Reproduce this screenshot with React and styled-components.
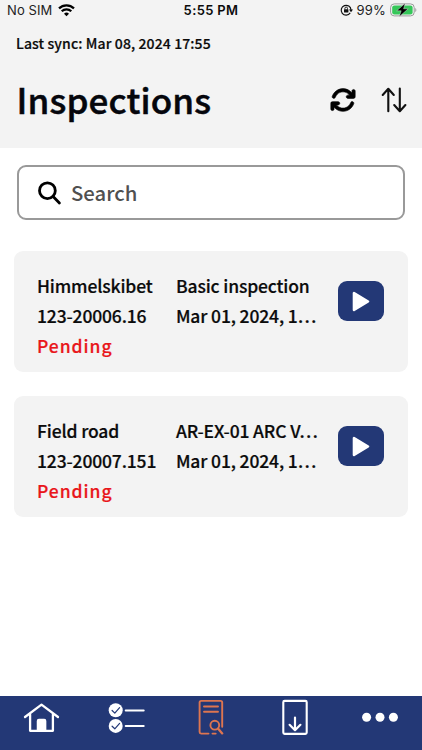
import styled, { createGlobalStyle } from "styled-components"
import { FaArrowsRotate } from "react-icons/fa6"

const inspections = [
    { id: 1, place: "Himmelskibet", number: "123-20006.16", type: "Basic inspection", date: "Mar 01, 2024, 1…", status: "Pending" },
    { id: 2, place: "Field road", number: "123-20007.151", type: "AR-EX-01 ARC V…", date: "Mar 01, 2024, 1…", status: "Pending" },
]

export default function App(){
    return(
        <>
            <GlobalStyle />
            <Screen>
                <Header>
                    <StatusBar />
                    <LastSync>Last sync: Mar 08, 2024 17:55</LastSync>
                    <TitleRow>
                        <H1>Inspections</H1>
                        <Actions>
                            <IconButton aria-label="Sync"><SyncIcon size={26} /></IconButton>
                            <IconButton aria-label="Sort"><SortIcon /></IconButton>
                        </Actions>
                    </TitleRow>
                </Header>
                <Main>
                    <SearchBox>
                        <SearchIcon />
                        <SearchInput placeholder="Search" />
                    </SearchBox>
                    <List>
                        {inspections.map((item) => <InspectionCard key={item.id} item={item} />)}
                    </List>
                </Main>
                <Footer>
                    <NavItem aria-label="Home"><HomeIcon /></NavItem>
                    <NavItem aria-label="Tasks"><TasksIcon /></NavItem>
                    <NavItem aria-label="Inspections" $active><InspectIcon /></NavItem>
                    <NavItem aria-label="Downloads"><DownloadIcon /></NavItem>
                    <NavItem aria-label="More"><MoreIcon /></NavItem>
                </Footer>
            </Screen>
        </>
    )
}

function StatusBar(){
    return(
        <Status>
            <StatusSide>
                <StatusText $spacing="0.1px">No SIM</StatusText>
                <svg width="17" height="13" viewBox="0 0 17 13">
                    <path d="M8.5 12.3 6 9.7a3.7 3.7 0 0 1 5 0Z" fill="#000" />
                    <path d="M3.7 7.3a7 7 0 0 1 9.6 0M1 4.4a10.8 10.8 0 0 1 15 0" fill="none" stroke="#000" strokeWidth="2.2" />
                </svg>
            </StatusSide>
            <Clock>5:55 PM</Clock>
            <StatusSide $end>
                <svg width="13" height="12" viewBox="0 0 13 12">
                    <path d="M10.2 8.9A4.9 4.9 0 1 1 11 6" fill="none" stroke="#111" strokeWidth="1.2" />
                    <path d="M9 5.6h4L11 8.2Z" fill="#111" />
                    <rect x="4" y="5.3" width="4.4" height="3.3" rx=".5" fill="#111" />
                    <path d="M4.9 5.5V4.4a1.3 1.3 0 0 1 2.6 0v1.1" fill="none" stroke="#111" strokeWidth=".9" />
                </svg>
                <StatusText $spacing="0.2px">99%</StatusText>
                <svg width="27" height="14" viewBox="0 0 27 14">
                    <rect x=".6" y=".9" width="23.6" height="12" rx="3.6" fill="none" stroke="#9a9a9a" strokeWidth="1" />
                    <rect x="2.2" y="2.4" width="20.4" height="9" rx="2.2" fill="#35c759" />
                    <path d="M25.3 5v4c1.4-.7 1.4-3.3 0-4Z" fill="#9a9a9a" />
                    <path d="M15.2.3 6.7 7.8h4.5L9.2 13.7l9-7.9h-4.6Z" fill="#000" stroke="#f3f3f3" strokeWidth=".4" />
                </svg>
            </StatusSide>
        </Status>
    )
}

function InspectionCard({ item }){
    return(
        <Card>
            <Column $width="139px">
                <Line>{item.place}</Line>
                <Line>{item.number}</Line>
                <Line $pending>{item.status}</Line>
            </Column>
            <Column $width="161.5px">
                <Line>{item.type}</Line>
                <Line>{item.date}</Line>
            </Column>
            <PlayButton aria-label="Start">
                <svg width="18" height="21" viewBox="0 0 18 21">
                    <path d="M2 2.1v16.8L16 10.5Z" fill="#fff" stroke="#fff" strokeWidth="2.6" strokeLinejoin="round" />
                </svg>
            </PlayButton>
        </Card>
    )
}

function SortIcon(){
    return(
        <svg width="26" height="26" viewBox="0 0 26 26" fill="none" stroke="#111" strokeWidth="2.1" strokeLinecap="round" strokeLinejoin="round">
            <path d="M7.3 24.2V2M1.7 8 7.3 1.8 12.8 8" />
            <path d="M18.8 1.5v22.3M13.2 18l5.6 6.2L24.4 18" />
        </svg>
    )
}

function SearchIcon(){
    return(
        <svg width="24" height="24" viewBox="0 0 24 24" fill="none" stroke="#000" strokeWidth="2.8" strokeLinecap="round">
            <circle cx="9.4" cy="9.7" r="7.9" />
            <path d="m15.1 15.5 6.3 6.4" />
        </svg>
    )
}

function HomeIcon(){
    return(
        <svg width="38" height="36" viewBox="0 0 38 36" fill="none" stroke="#fff" strokeWidth="2.3" strokeLinecap="round" strokeLinejoin="round">
            <path d="M2 18 18.5 5.7 35 18M7.1 15.6v16.2h22.8V15.6" />
            <path d="M14.9 31.3v-9.4q0-1 1-1h5.3q1 0 1 1v9.4Z" fill="#fff" />
        </svg>
    )
}

function TasksIcon(){
    return(
        <svg width="38" height="36" viewBox="0 0 38 36" fill="none" strokeLinecap="round" strokeLinejoin="round">
            <circle cx="7.7" cy="11.2" r="7" fill="#fff" />
            <circle cx="7.7" cy="26.9" r="7" fill="#fff" />
            <path d="m4.1 11.5 2.7 2.6 4.8-5.4M4.1 27.2l2.7 2.6 4.8-5.4" stroke="#233876" strokeWidth="1.2" />
            <path d="M17.7 11.4h18M17.7 27h18" stroke="#fff" strokeWidth="2" />
        </svg>
    )
}

function InspectIcon(){
    return(
        <svg width="38" height="36" viewBox="0 0 38 36" fill="none" stroke="currentColor" strokeWidth="1.9" strokeLinecap="round" strokeLinejoin="round">
            <path d="M16.5 34.6H9.1q-1.5 0-1.5-1.5V3.5q0-1.6 1.6-1.6h19.4q1.6 0 1.6 1.6v24.2" />
            <path d="M12 7.5h14M12 12.7h14M20.5 34.6h3.2" />
            <circle cx="22.8" cy="26.2" r="4.4" />
            <path d="m26.2 29.7 4 4.7" strokeWidth="2.3" />
        </svg>
    )
}

function DownloadIcon(){
    return(
        <svg width="38" height="36" viewBox="0 0 38 36" fill="none" stroke="#fff" strokeWidth="2.2" strokeLinecap="round" strokeLinejoin="round">
            <rect x="7.3" y="1.9" width="23.4" height="33" rx="1.3" strokeWidth="2.1" />
            <path d="M19 18.5v12.3M13.6 25.8l5.4 5.4 5.4-5.4" />
        </svg>
    )
}

function MoreIcon(){
    return(
        <svg width="38" height="36" viewBox="0 0 38 36" fill="#fff">
            <circle cx="5.6" cy="18.3" r="4.5" />
            <circle cx="19" cy="18.3" r="4.5" />
            <circle cx="32.4" cy="18.3" r="4.5" />
        </svg>
    )
}

const GlobalStyle = createGlobalStyle`
    * {
        box-sizing: border-box;
        margin: 0;
        padding: 0;
    }
    body {
        background: #FFFFFF;
        color: #0B0B0B;
        font-family: "Noto Sans CJK KR", sans-serif;
        overflow: hidden;
    }
    button {
        border: 0;
        background: none;
        color: inherit;
    }
    svg {
        display: block;
        flex-shrink: 0;
    }
`

const Screen = styled.div`
    width: 422px;
    height: 750px;
    display: flex;
    flex-direction: column;
`

const Header = styled.header`
    height: 148px;
    background: #F3F3F3;
`

const Status = styled.div`
    height: 20px;
    padding: 0 5px 0 7px;
    display: grid;
    grid-template-columns: 1fr auto 1fr;
    align-items: center;
    font-family: Inter, sans-serif;
`

const StatusSide = styled.div`
    display: flex;
    align-items: center;
    gap: ${({ $end }) => $end ? "4px" : "6px"};
    justify-content: ${({ $end }) => $end ? "flex-end" : "flex-start"};
`

const StatusText = styled.span`
    font-size: 13px;
    line-height: 20px;
    letter-spacing: ${({ $spacing }) => $spacing};
    color: #222222;
`

const Clock = styled.span`
    margin-right: 2px;
    font-size: 13px;
    font-weight: 600;
    line-height: 20px;
    letter-spacing: 0.35px;
`

const LastSync = styled.p`
    margin: 12px 0 0 16px;
    font-size: 14px;
    font-weight: 500;
    line-height: 22px;
    letter-spacing: 0.11px;
    -webkit-text-stroke: 0.2px currentColor;
`

const TitleRow = styled.div`
    height: 52px;
    margin-top: 20px;
    padding: 0 15px 0 16.5px;
    display: flex;
    align-items: center;
    justify-content: space-between;
`

const H1 = styled.h1`
    margin-bottom: 2px;
    font-size: 35px;
    font-weight: 500;
    line-height: 48px;
    letter-spacing: 0.15px;
    color: #05060C;
    -webkit-text-stroke: 0.5px currentColor;
`

const Actions = styled.div`
    display: flex;
    align-items: center;
    gap: 25px;
`

const IconButton = styled.button`
    color: #000000;
`

const SyncIcon = styled(FaArrowsRotate)`
    overflow: visible;
    stroke: #000000;
    stroke-width: 12px;
    stroke-linejoin: round;
`

const Main = styled.main`
    flex: 1;
    padding: 17px 14px 0;
`

const SearchBox = styled.label`
    height: 55px;
    margin: 0 3px;
    padding: 0 19px;
    display: flex;
    align-items: center;
    gap: 9px;
    border: 2px solid #999999;
    border-radius: 9px;
`

const SearchInput = styled.input`
    flex: 1;
    min-width: 0;
    margin-bottom: 2px;
    border: 0;
    outline: 0;
    background: none;
    font-family: inherit;
    font-size: 20.3px;
    font-weight: 500;
    line-height: 30px;

    &::placeholder {
        color: #505050;
        opacity: 1;
    }
`

const List = styled.div`
    margin-top: 31px;
    display: flex;
    flex-direction: column;
    gap: 24px;
`

const Card = styled.article`
    height: 121px;
    padding: 20px 23px 0;
    display: flex;
    align-items: flex-start;
    background: #F3F3F3;
    border-radius: 9px;
`

const Column = styled.div`
    width: ${({ $width }) => $width};
    flex-shrink: 0;
`

const Line = styled.p`
    font-size: 17.5px;
    font-weight: 500;
    line-height: 30px;
    white-space: nowrap;
    letter-spacing: ${({ $pending }) => $pending ? "0.95px" : "-0.15px"};
    color: ${({ $pending }) => $pending ? "#E9161B" : "inherit"};
    -webkit-text-stroke: 0.2px currentColor;
`

const PlayButton = styled.button`
    width: 46.5px;
    height: 40px;
    margin-top: 10px;
    display: flex;
    align-items: center;
    justify-content: center;
    flex-shrink: 0;
    background: #233876;
    border-radius: 9px;
`

const Footer = styled.footer`
    height: 54px;
    padding-top: 3px;
    display: grid;
    grid-template-columns: repeat(5, 1fr);
    align-items: start;
    background: #233876;
`

const NavItem = styled.button`
    display: flex;
    justify-content: center;
    color: ${({ $active }) => $active ? "#DD7550" : "#FFFFFF"};
`
